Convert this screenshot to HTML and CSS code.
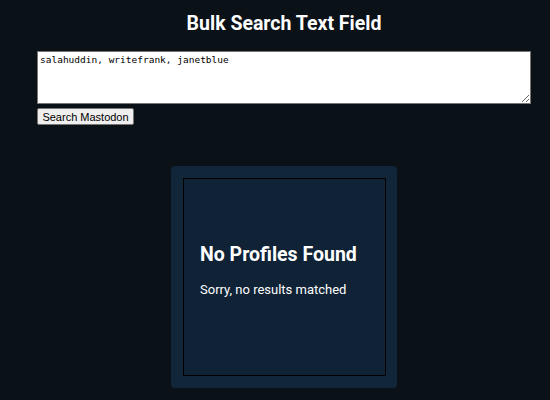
FILE: index.html
```html
<!DOCTYPE html>
<html>
<head>
<meta charset="utf-8">
<link rel="stylesheet" href="styles.css">
</head>
<body>
<div class="page">
  <h1 class="title">Bulk Search Text Field</h1>
  <form class="search">
    <textarea class="names">salahuddin, writefrank, janetblue</textarea>
    <button type="button" class="btn">Search Mastodon</button>
  </form>
  <section class="results">
    <div class="card">
      <h2 class="card-title">No Profiles Found</h2>
      <p class="card-text">Sorry, no results matched</p>
    </div>
  </section>
</div>
</body>
</html>
```
FILE: styles.css
```css
html, body {
  margin: 0;
  background: #0a1117;
  color: #ffffff;
  font-family: Roboto, "Liberation Sans", sans-serif;
}
.page {
  margin-left: 37px;
  width: 494px;
  display: flex;
  flex-direction: column;
}
.title {
  margin: 12px 0 0;
  font-size: 19.5px;
  font-weight: 700;
  line-height: 23px;
  text-align: center;
}
.search {
  margin-top: 16px;
  display: flex;
  flex-direction: column;
  align-items: flex-start;
  gap: 4px;
}
.names {
  box-sizing: border-box;
  width: 494px;
  height: 53px;
  margin: 0;
  padding: 2px 2px;
  border: 1px solid #767676;
  background: #ffffff;
  color: #000000;
  font-family: "DejaVu Sans Mono", "Liberation Mono", monospace;
  font-size: 9.5px;
  line-height: 12px;
}
.btn {
  box-sizing: border-box;
  width: 97px;
  height: 17px;
  margin: 0;
  padding: 0;
  border: 1px solid #767676;
  border-radius: 2px;
  background: #efefef;
  color: #000000;
  font-family: "Liberation Sans", Arial, sans-serif;
  font-size: 11px;
  line-height: 14px;
  white-space: nowrap;
}
.results {
  margin-top: 41px;
  align-self: center;
  width: 226px;
  height: 222px;
  box-sizing: border-box;
  padding: 12px 11px 12px 12px;
  background: #12263a;
  border-radius: 4px;
  display: flex;
}
.card {
  flex: 1;
  border: 1px solid #000000;
  background: #0f2236;
  display: flex;
  flex-direction: column;
  justify-content: center;
  padding: 16px 16px 30px;
}
.card-title {
  margin: 0;
  font-size: 19.5px;
  font-weight: 700;
  line-height: 24px;
}
.card-text {
  margin: 15px 0 0;
  font-size: 13px;
  line-height: 16px;
}
```
